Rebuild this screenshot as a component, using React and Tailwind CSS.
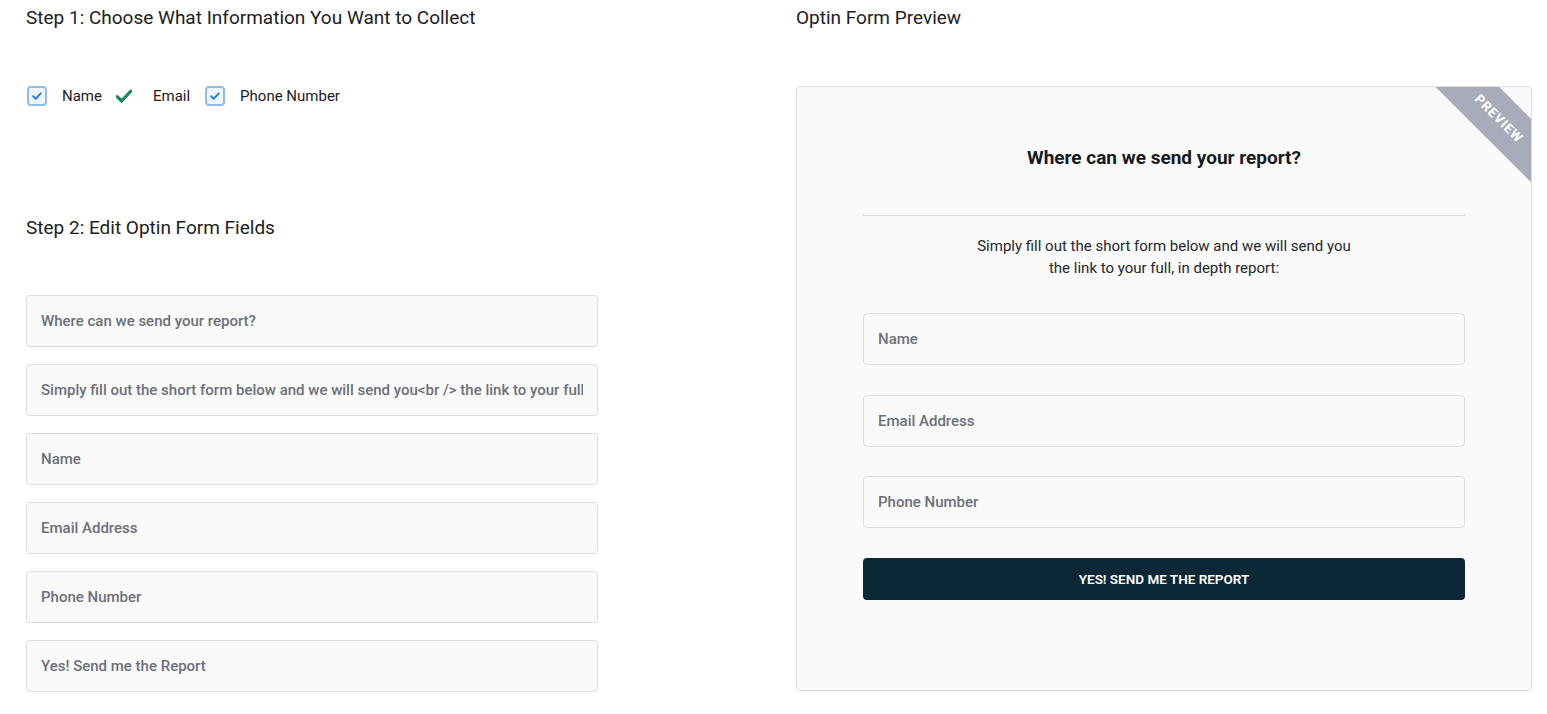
import React from "react";

const font = { fontFamily: "Roboto, 'Noto Sans', sans-serif" };

function BlueCheck() {
  return (
    <svg width="20" height="20" viewBox="0 0 20 20" className="shrink-0">
      <rect x="1" y="1" width="18" height="18" rx="3" fill="#eef5fc" stroke="#8fbde8" strokeWidth="2" />
      <path d="M6.2 10.3 L8.7 12.7 L13.8 7.4" fill="none" stroke="#2f7fd1" strokeWidth="2" strokeLinecap="round" strokeLinejoin="round" />
    </svg>
  );
}

function GreenCheck() {
  return (
    <svg width="16" height="14" viewBox="0 0 16 14" className="shrink-0">
      <path d="M1.2 7.6 L5.6 12 L14.8 2.2" fill="none" stroke="#168a5c" strokeWidth="3.2" strokeLinecap="round" strokeLinejoin="round" />
    </svg>
  );
}

function LeftField({ value }) {
  return (
    <input
      readOnly
      defaultValue={value}
      className="h-[52px] w-full rounded-[4px] border border-[#dcdde2] bg-[#fafafa] pl-[14px] pr-[14px] text-[15px] font-medium text-[#6c707b] outline-none"
      style={font}
    />
  );
}

function PreviewField({ placeholder }) {
  return (
    <input
      placeholder={placeholder}
      className="h-[52px] w-full rounded-[4px] border border-[#dcdde2] bg-[#fafafa] pl-[14px] pr-[14px] text-[15px] font-medium text-[#6c707b] outline-none placeholder:text-[#6c707b]"
      style={font}
    />
  );
}

export default function App() {
  return (
    <div className="flex h-[714px] w-[1547px] bg-white pl-[26px]" style={font}>
      <div className="flex w-[572px] flex-col">
        <h2 className="mt-[7px] text-[19px] leading-[22px] font-normal text-[#1d2024]">
          Step 1: Choose What Information You Want to Collect
        </h2>
        <div className="mt-[55px] flex h-[24px] items-center pl-[1px] text-[15px] font-normal text-[#1d2024]">
          <BlueCheck />
          <span className="ml-[15px]">Name</span>
          <span className="ml-[14px]"><GreenCheck /></span>
          <span className="ml-[21px]">Email</span>
          <span className="ml-[15px]"><BlueCheck /></span>
          <span className="ml-[15px]">Phone Number</span>
        </div>
        <h2 className="mt-[109px] text-[19px] leading-[22px] font-normal text-[#1d2024]">
          Step 2: Edit Optin Form Fields
        </h2>
        <div className="mt-[56px] flex flex-col gap-[17px]">
          <LeftField value="Where can we send your report?" />
          <LeftField value="Simply fill out the short form below and we will send you<br /> the link to your full, in depth report:" />
          <LeftField value="Name" />
          <LeftField value="Email Address" />
          <LeftField value="Phone Number" />
          <LeftField value="Yes! Send me the Report" />
        </div>
      </div>

      <div className="ml-[198px] flex w-[736px] flex-col">
        <h2 className="mt-[7px] text-[19px] leading-[22px] font-normal text-[#1d2024]">
          Optin Form Preview
        </h2>
        <div className="relative mt-[57px] h-[605px] overflow-hidden rounded-[4px] border border-[#dedfe3] bg-[#fafafa] px-[66px] pt-[59px]">
          <div className="pointer-events-none absolute top-0 right-0 h-[96px] w-[96px] overflow-hidden">
            <div className="absolute top-[9px] left-[-16px] flex h-[45px] w-[160px] rotate-45 items-center justify-center bg-[#a8acb9] text-[13px] font-bold tracking-[1px] text-white">
              PREVIEW
            </div>
          </div>
          <h3 className="text-center text-[19px] leading-[24px] font-bold text-[#16191d]">
            Where can we send your report?
          </h3>
          <div className="mt-[45px] h-px bg-[#dcdde2]" />
          <p className="mt-[19px] text-center text-[15px] leading-[22px] text-[#25282c]">
            Simply fill out the short form below and we will send you
            <br /> the link to your full, in depth report:
          </p>
          <div className="mt-[34px]">
            <PreviewField placeholder="Name" />
          </div>
          <div className="mt-[30px]">
            <PreviewField placeholder="Email Address" />
          </div>
          <div className="mt-[29px]">
            <PreviewField placeholder="Phone Number" />
          </div>
          <button className="mt-[30px] flex h-[42px] w-full items-center justify-center rounded-[4px] bg-[#0c2736] text-[13.5px] font-semibold text-white">
            YES! SEND ME THE REPORT
          </button>
        </div>
      </div>
    </div>
  );
}
